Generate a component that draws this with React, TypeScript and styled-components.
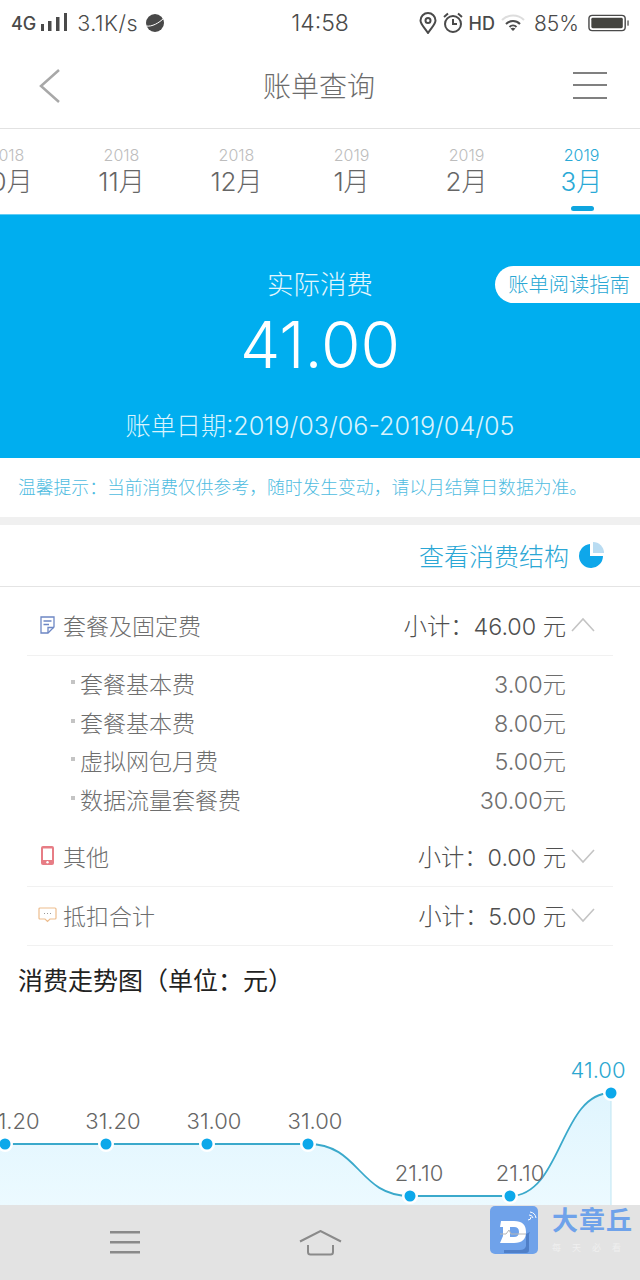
import styled, { createGlobalStyle } from "styled-components";

const GlobalStyle = createGlobalStyle`
  html, body {
    margin: 0;
    padding: 0;
    background: #ffffff;
    font-family: Inter, "Noto Sans CJK SC", sans-serif;
  }
`;

const Page = styled.div`
  width: 640px;
  height: 1280px;
  overflow: hidden;
  position: relative;
  background: #ffffff;
  color: #6e6e6e;
  display: flex;
  flex-direction: column;
`;

const StatusBar = styled.div`
  height: 46px;
  flex: none;
  display: grid;
  grid-template-columns: 1fr auto 1fr;
  align-items: center;
  padding: 0 11px;
  color: #4a4a4a;
  font-size: 20px;
  font-weight: 300;
`;

const StatusSide = styled.div<{ $right?: boolean }>`
  display: flex;
  align-items: center;
  gap: ${(p) => (p.$right ? "6px" : "5px")};
  justify-content: ${(p) => (p.$right ? "flex-end" : "flex-start")};
`;

const StatusStrong = styled.span`
  font-size: 18px;
  font-weight: 500;
`;

const StatusSpeed = styled.span`
  font-size: 21.500px;
  letter-spacing: 0.500px;
  margin: 0 2px 0 4px;
`;

const StatusPercent = styled.span`
  font-size: 21px;
  margin: 0 3px;
`;

const StatusTime = styled.div`
  font-size: 23px;
  font-weight: 300;
`;

const NavBar = styled.div`
  height: 83px;
  flex: none;
  box-sizing: border-box;
  border-bottom: 1px solid #e2e2e2;
  display: flex;
  align-items: center;
  justify-content: space-between;
  padding: 0 33px 2px 38px;
`;

const NavTitle = styled.div`
  font-size: 28px;
  color: #6b6b6b;
  font-weight: 300;
  margin: -3px 0 0 3px;
`;

const MonthRow = styled.div`
  height: 85px;
  flex: none;
  display: flex;
  margin-left: -51px;
`;

const MonthTab = styled.div<{ $active?: boolean }>`
  flex: 0 0 115px;
  display: flex;
  flex-direction: column;
  align-items: center;
  padding-top: 16px;
  position: relative;
  color: ${(p) => (p.$active ? "#29a9d6" : "#666666")};
`;

const MonthYear = styled.span<{ $active?: boolean }>`
  font-size: 16px;
  line-height: 20px;
  font-weight: 300;
  color: ${(p) => (p.$active ? "#29a9d6" : "#bdbdbd")};
`;

const MonthName = styled.span`
  font-size: 26px;
  line-height: 33px;
  font-weight: 300;
`;

const MonthMark = styled.span`
  position: absolute;
  left: 47px;
  bottom: 3px;
  width: 23px;
  height: 5px;
  border-radius: 3px;
  background: #0ea5df;
`;

const Hero = styled.div`
  height: 244px;
  flex: none;
  box-sizing: border-box;
  border-top: 1px solid #62cdf5;
  background: #00aeef;
  color: #ffffff;
  position: relative;
  display: flex;
  flex-direction: column;
  align-items: center;
  font-weight: 300;
`;

const HeroLabel = styled.div`
  font-size: 26.500px;
  line-height: 36px;
  margin-top: 51px;
  color: #e3f6fd;
`;

const HeroAmount = styled.div`
  font-size: 64px;
  line-height: 72px;
  margin-top: 7px;
`;

const HeroDate = styled.div`
  font-size: 25.200px;
  line-height: 32px;
  margin-top: 29px;
  color: #d8f3fd;
  white-space: nowrap;
`;

const GuideTag = styled.div`
  position: absolute;
  right: 0;
  top: 51px;
  width: 145px;
  height: 37px;
  box-sizing: border-box;
  padding-left: 3px;
  border-radius: 19px 0 0 19px;
  background: #ffffff;
  color: #2aa8d4;
  font-size: 20.300px;
  line-height: 38px;
  text-align: center;
`;

const Notice = styled.div`
  height: 59px;
  flex: none;
  line-height: 59px;
  padding-left: 18px;
  font-size: 17.800px;
  color: #4fbcdf;
  white-space: nowrap;
  font-weight: 300;
`;

const Gap = styled.div`
  height: 8px;
  flex: none;
  background: #f0f0f0;
`;

const StructureRow = styled.div`
  height: 62px;
  flex: none;
  box-sizing: border-box;
  border-bottom: 1px solid #e4e4e4;
  display: flex;
  align-items: center;
  justify-content: flex-end;
  gap: 9px;
  padding: 0 36px 2px 0;
  font-size: 25px;
  color: #2ba7d5;
  font-weight: 300;
`;

const Section = styled.div`
  flex: none;
  padding: 10px 27px 0;
`;

const FeeHead = styled.div`
  height: 59px;
  box-sizing: border-box;
  border-bottom: 1px solid #f1f1f1;
  padding-bottom: 3px;
  display: flex;
  align-items: center;
  font-size: 23px;
  font-weight: 300;
`;

const FeeIcon = styled.span`
  width: 36px;
  display: flex;
  justify-content: center;
  padding-left: 4px;
  box-sizing: border-box;
`;

const FeeTotal = styled.span`
  margin-left: auto;
  font-size: 23.300px;
  color: #4f4f4f;
`;

const Chevron = styled.span`
  width: 47px;
  display: flex;
  justify-content: flex-start;
  padding-left: 5px;
  box-sizing: border-box;
`;

const SubList = styled.div`
  padding: 8px 47px 10px 43px;
`;

const SubRow = styled.div`
  height: 38.500px;
  display: flex;
  align-items: center;
  justify-content: space-between;
  font-size: 23px;
  font-weight: 300;
  position: relative;
  padding-left: 10px;

  &::before {
    content: "";
    position: absolute;
    left: 1px;
    top: 16px;
    width: 4px;
    height: 4px;
    background: #c4c4c4;
  }
`;

const SubValue = styled.span`
  font-size: 23.400px;
`;

const TrendTitle = styled.div`
  flex: none;
  font-size: 25px;
  line-height: 32px;
  color: #222222;
  padding: 19px 0 0 18px;
  font-weight: 400;
`;

const ChartArea = styled.div`
  flex: 1;
  min-height: 0;
  overflow: hidden;
`;

const TrendChart = styled.svg`
  display: block;
`;

const ChartLabel = styled.text<{ $latest?: boolean }>`
  font-size: 22px;
  font-weight: 300;
  text-anchor: middle;
  fill: ${(p) => (p.$latest ? "#2ba7d0" : "#666666")};
`;

const BottomBar = styled.div`
  height: 75px;
  flex: none;
  box-sizing: border-box;
  background: #e3e3e3;
  display: flex;
  align-items: flex-start;
  padding: 25px 0 0 110px;
  gap: 159px;
`;

const Watermark = styled.div`
  position: absolute;
  left: 490px;
  top: 1206px;
  display: flex;
  gap: 14px;
`;

const WatermarkTexts = styled.div`
  display: flex;
  flex-direction: column;
`;

const WatermarkName = styled.span`
  font-size: 26px;
  line-height: 30px;
  font-weight: 700;
  color: #6fa2ea;
  letter-spacing: 1px;
`;

const WatermarkSub = styled.span`
  font-size: 9px;
  line-height: 16px;
  margin-top: 4px;
  color: #efefef;
  letter-spacing: 11px;
`;

// chart coordinates are page pixels, the viewBox starts where the chart area does
const chartTop = 996;
const chartHeight = 209;

const points = [
  { x: 5, y: 1143, label: "31.20", labelX: 12 },
  { x: 106, y: 1143, label: "31.20", labelX: 113 },
  { x: 207, y: 1143, label: "31.00", labelX: 214 },
  { x: 308, y: 1143, label: "31.00", labelX: 315 },
  { x: 410, y: 1195, label: "21.10", labelX: 419 },
  { x: 510, y: 1195, label: "21.10", labelX: 520 },
  { x: 611, y: 1092, label: "41.00", labelX: 598 },
];

const curve =
  "M5 1143 L308 1143 C360 1143 358 1195 410 1195 L510 1195 C562 1195 560 1092 611 1092";

const months = [
  { year: "2018", name: "10月" },
  { year: "2018", name: "11月" },
  { year: "2018", name: "12月" },
  { year: "2019", name: "1月" },
  { year: "2019", name: "2月" },
  { year: "2019", name: "3月", active: true },
];

const subItems = [
  { name: "套餐基本费", value: "3.00元" },
  { name: "套餐基本费", value: "8.00元" },
  { name: "虚拟网包月费", value: "5.00元" },
  { name: "数据流量套餐费", value: "30.00元" },
];

const ChevronIcon = ({ up }: { up?: boolean }) => (
  <svg width="24" height="16" viewBox="0 0 24 16" fill="none">
    <path
      d={up ? "M1 14 L12 2 L23 14" : "M1 2 L12 14 L23 2"}
      stroke="#c4c4c4"
      strokeWidth="1.600"
    />
  </svg>
);

const App = () => {
  return (
    <Page>
      <GlobalStyle />
      <StatusBar>
        <StatusSide>
          <StatusStrong>4G</StatusStrong>
          <svg width="27" height="20" viewBox="0 0 27 20" fill="#4a4a4a">
            <rect x="0" y="11" width="3" height="7" />
            <rect x="7" y="8" width="3.500" height="10" />
            <rect x="15" y="4" width="3.500" height="14" />
            <rect x="23" y="0" width="3" height="18" />
          </svg>
          <StatusSpeed>3.1K/s</StatusSpeed>
          <svg width="20" height="20" viewBox="0 0 20 20">
            <circle cx="10" cy="10" r="9" fill="#484848" />
            <path d="M1 13 C7 14 14 10 19 5" stroke="#ffffff" strokeWidth="1" fill="none" />
          </svg>
        </StatusSide>
        <StatusTime>14:58</StatusTime>
        <StatusSide $right>
          <svg width="18" height="22" viewBox="0 0 18 22" fill="none" stroke="#4a4a4a" strokeWidth="2">
            <path d="M9 21 C5 15 1.500 12 1.500 8.500 A7.500 7.500 0 0 1 16.500 8.500 C16.500 12 13 15 9 21 Z" />
            <circle cx="9" cy="8.500" r="2.500" />
          </svg>
          <svg width="20" height="22" viewBox="0 0 20 22" fill="none" stroke="#4a4a4a" strokeWidth="2">
            <circle cx="10" cy="12" r="8" />
            <path d="M10 7 V12 H14 M1 5 L5 1.500 M19 5 L15 1.500" />
          </svg>
          <StatusStrong>HD</StatusStrong>
          <svg width="24" height="18" viewBox="0 0 24 18" fill="none">
            <path d="M1 6 C7 0 17 0 23 6" stroke="#dddddd" strokeWidth="2" />
            <path d="M5 10 C9 6 15 6 19 10" stroke="#4a4a4a" strokeWidth="2" />
            <path d="M8.500 13 C10.500 11 13.500 11 15.500 13" stroke="#4a4a4a" strokeWidth="2" />
            <path d="M12 17 L9.500 14.500 C11 13.500 13 13.500 14.500 14.500 Z" fill="#4a4a4a" />
          </svg>
          <StatusPercent>85%</StatusPercent>
          <svg width="41" height="18" viewBox="0 0 43 18">
            <rect x="1" y="1" width="38" height="16" rx="3.500" fill="none" stroke="#4a4a4a" strokeWidth="1.500" />
            <rect x="3.500" y="3.500" width="33" height="11" rx="1.500" fill="#444440" />
            <rect x="41" y="6" width="2" height="6" rx="1" fill="#888888" />
          </svg>
        </StatusSide>
      </StatusBar>

      <NavBar>
        <svg width="24" height="36" viewBox="0 0 24 36" fill="none">
          <path d="M21 2 L3 18 L21 34" stroke="#a8a8a8" strokeWidth="2.500" />
        </svg>
        <NavTitle>账单查询</NavTitle>
        <svg width="34" height="28" viewBox="0 0 34 28" fill="#808080">
          <rect x="0" y="0" width="34" height="2" />
          <rect x="0" y="12" width="34" height="2" />
          <rect x="0" y="25" width="34" height="2" />
        </svg>
      </NavBar>

      <MonthRow>
        {months.map((m) => (
          <MonthTab key={m.name} $active={m.active}>
            <MonthYear $active={m.active}>{m.year}</MonthYear>
            <MonthName>{m.name}</MonthName>
            {m.active && <MonthMark />}
          </MonthTab>
        ))}
      </MonthRow>

      <Hero>
        <HeroLabel>实际消费</HeroLabel>
        <HeroAmount>41.00</HeroAmount>
        <HeroDate>账单日期:2019/03/06-2019/04/05</HeroDate>
        <GuideTag>账单阅读指南</GuideTag>
      </Hero>

      <Notice>温馨提示：当前消费仅供参考，随时发生变动，请以月结算日数据为准。</Notice>
      <Gap />

      <StructureRow>
        <span>查看消费结构</span>
        <svg width="26" height="27" viewBox="0 0 26 27">
          <path d="M12 3 A12 12 0 1 0 25 15 H12 Z" fill="#0ea7ea" />
          <path d="M15 1 A11 11 0 0 1 26 12 H15 Z" fill="#b9dcf2" />
        </svg>
      </StructureRow>

      <Section>
        <FeeHead>
          <FeeIcon>
            <svg width="15" height="18" viewBox="0 0 15 18" fill="none" stroke="#6d87c4" strokeWidth="1.300">
              <path d="M1 1 H14 V11 L8 17 H1 Z" />
              <path d="M8 17 V11.500 H14 M3.500 5 H11.500 M3.500 8.500 H9" />
            </svg>
          </FeeIcon>
          <span>套餐及固定费</span>
          <FeeTotal>小计：46.00 元</FeeTotal>
          <Chevron>
            <ChevronIcon up />
          </Chevron>
        </FeeHead>
        <SubList>
          {subItems.map((s) => (
            <SubRow key={s.name + s.value}>
              <span>{s.name}</span>
              <SubValue>{s.value}</SubValue>
            </SubRow>
          ))}
        </SubList>
        <FeeHead>
          <FeeIcon>
            <svg width="13" height="19" viewBox="0 0 13 19">
              <rect x="0" y="0" width="13" height="19" rx="2" fill="#e77d85" />
              <rect x="2" y="2.500" width="9" height="11.500" fill="#ffffff" />
              <circle cx="6.500" cy="16.300" r="1.200" fill="#ffffff" />
            </svg>
          </FeeIcon>
          <span>其他</span>
          <FeeTotal>小计：0.00 元</FeeTotal>
          <Chevron>
            <ChevronIcon />
          </Chevron>
        </FeeHead>
        <FeeHead>
          <FeeIcon>
            <svg width="19" height="16" viewBox="0 0 19 16" fill="none" stroke="#edbd8e" strokeWidth="1.200">
              <path d="M2 1 H17 Q18 1 18 2 V11 Q18 12 17 12 H12 L9.500 14.500 L7 12 H2 Q1 12 1 11 V2 Q1 1 2 1 Z" />
              <path d="M6 6.500 H7 M9 6.500 H10 M12 6.500 H13" stroke="#9a9a9a" />
            </svg>
          </FeeIcon>
          <span>抵扣合计</span>
          <FeeTotal>小计：5.00 元</FeeTotal>
          <Chevron>
            <ChevronIcon />
          </Chevron>
        </FeeHead>
      </Section>

      <TrendTitle>消费走势图（单位：元）</TrendTitle>

      <ChartArea>
        <TrendChart width="640" height={chartHeight} viewBox={`0 ${chartTop} 640 ${chartHeight}`}>
          <defs>
            <linearGradient id="areaFill" x1="0" y1="0" x2="0" y2="1">
              <stop offset="0" stopColor="#e0f5fe" />
              <stop offset="1" stopColor="#ecfaff" />
            </linearGradient>
          </defs>
          <path d={`${curve} L611 1205 L0 1205 L0 1143 Z`} fill="url(#areaFill)" />
          <path d="M611 1092 V1205" stroke="#bfe5f2" strokeWidth="1" />
          <path d={curve} fill="none" stroke="#3aa9cb" strokeWidth="1.800" />
          {points.map((p) => (
            <g key={p.x}>
              <circle cx={p.x} cy={p.y} r="8" fill="#ffffff" />
              <circle cx={p.x} cy={p.y} r="5.500" fill="#0ca8ea" />
              <ChartLabel x={p.labelX} y={p.y - 15} $latest={p.x === 611}>
                {p.label}
              </ChartLabel>
            </g>
          ))}
        </TrendChart>
      </ChartArea>

      <BottomBar>
        <svg width="30" height="26" viewBox="0 0 30 26" fill="#8a8a8a">
          <rect x="0" y="1" width="30" height="2.500" />
          <rect x="0" y="11" width="30" height="2.500" />
          <rect x="0" y="21" width="30" height="2.500" />
        </svg>
        <svg width="43" height="26" viewBox="0 0 43 26" fill="none" stroke="#8a8a8a" strokeWidth="2">
          <path d="M1 11.500 L21.500 1 L42 11.500" />
          <path d="M9 15 V22 Q9 24.500 11.500 24.500 H31.500 Q34 24.500 34 22 V15" />
        </svg>
      </BottomBar>

      <Watermark>
        <svg width="48" height="48" viewBox="0 0 48 48">
          <rect x="0" y="0" width="48" height="48" rx="5" fill="#6fa2ea" />
          <path d="M14 47 H36 Q39 47 39 44 V28 L40 26 L36 28 V40 Q35 44 30 44 H14 Z" fill="#4f7fc8" />
          <path d="M11 15 H24 Q36 15 36 26 Q36 37 24 37 H10 L13 30 V21 H10 Z M20 21 V31 H24 Q29 31 29 26 Q29 21 24 21 Z" fill="#ffffff" fillRule="evenodd" />
          <path d="M10 28 H16 L19 24 L21 28 H36" stroke="#b6b6b6" strokeWidth="1" fill="none" />
          <path d="M38 14 A3 3 0 0 0 41 11 M39 9 A4 4 0 0 1 43 12 M40 6 A7 7 0 0 1 46 12" stroke="#ffffff" strokeWidth="1" fill="none" />
        </svg>
        <WatermarkTexts>
          <WatermarkName>大章丘</WatermarkName>
          <WatermarkSub>每天必看</WatermarkSub>
        </WatermarkTexts>
      </Watermark>
    </Page>
  );
};

export default App;
